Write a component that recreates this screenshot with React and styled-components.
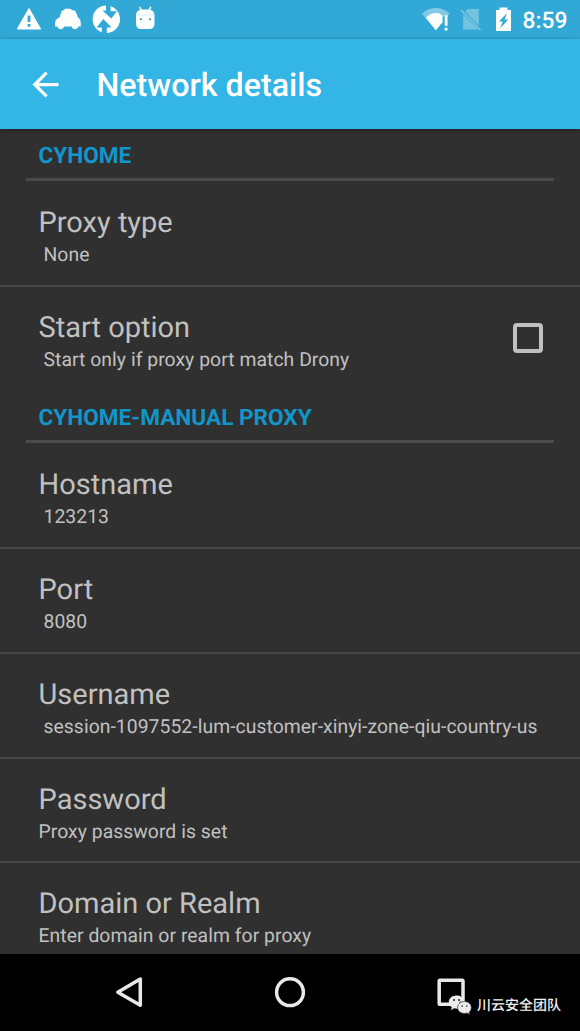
import React from 'react';
import styled, { createGlobalStyle } from 'styled-components';

const GlobalStyle = createGlobalStyle`
  * { box-sizing: border-box; }
  body {
    margin: 0;
    background: #000;
    font-family: Roboto, "Noto Sans CJK SC", sans-serif;
    text-rendering: geometricPrecision;
  }
`;

const Screen = styled.div`
  width: 580px;
  height: 1031px;
  display: flex;
  flex-direction: column;
  overflow: hidden;
  background: #303030;
`;

const StatusBar = styled.header`
  height: 39px;
  flex: none;
  display: flex;
  justify-content: space-between;
  background: #31a8d6;
  color: #fff;
`;

const StatusIcons = styled.svg`
  display: block;
  flex: none;
`;

const StatusRight = styled.div`
  display: flex;
`;

const Clock = styled.span`
  width: 57.5px;
  font-size: 22.8px;
  font-weight: 500;
  line-height: 41px;
  white-space: nowrap;
`;

const AppBar = styled.div`
  height: 90px;
  flex: none;
  display: flex;
  align-items: center;
  padding-left: 25.5px;
  background: #33b5e5;
  color: #fff;
  box-shadow: 0 1px 5px rgba(0, 0, 0, 0.3);
  z-index: 1;
`;

const BackButton = styled.button`
  width: 71px;
  height: 39px;
  padding: 0;
  border: 0;
  background: none;
  color: inherit;
  text-align: left;

  svg { display: block; }
`;

const PageTitle = styled.h1`
  margin: 2px 0 0;
  font-size: 32.2px;
  line-height: 40px;
  font-weight: 500;
`;

const Settings = styled.main`
  flex: 1;
  min-height: 0;
  overflow: hidden;
`;

const CategoryTitle = styled.h2`
  height: 51.5px;
  margin: 0 26px;
  padding: 11px 12.5px 0;
  border-bottom: 3px solid #4b4b4b;
  color: #1295c8;
  font-size: 22.6px;
  line-height: 32px;
  font-weight: 700;
`;

const Row = styled.div`
  display: flex;
  height: ${(p) => (p.$first ? 106.25 : 104.7)}px;
  padding: ${(p) => (p.$first ? 24.5 : 23)}px 37px 0 38.5px;
  border-bottom: ${(p) => (p.$last ? 'none' : '2px solid #464646')};
  color: #c1c1c1;
`;

const RowText = styled.div`
  flex: 1;
  white-space: nowrap;
`;

const RowTitle = styled.div`
  font-size: 29px;
  line-height: 36px;
`;

const Summary = styled.div`
  padding-left: ${(p) => (p.$indent ? 5 : 0)}px;
  font-size: 19.33px;
  line-height: 27.5px;
  letter-spacing: 0.055px;
`;

const Checkbox = styled.span`
  width: 30px;
  height: 30px;
  margin-top: 13px;
  border: 4px solid #c0c0c0;
  border-radius: 4px;
`;

const NavBar = styled.nav`
  position: relative;
  height: 77px;
  flex: none;
  background: #000;

  svg { display: block; }
`;

const Watermark = styled.div`
  position: absolute;
  left: 447px;
  top: 39px;
  display: flex;
  gap: 5px;
  color: #f2f2f2;
  font-family: "Noto Sans CJK SC", sans-serif;
  font-size: 14px;
  font-weight: 500;
  line-height: 24px;
  white-space: nowrap;
`;

function NotificationIcons() {
  return (
    <StatusIcons width="170" height="39" fill="#fff">
      <path d="M29 8.5 L40.6 29 H17.2 Z" stroke="#fff" strokeWidth="1" strokeLinejoin="round" />
      <path d="M27.6 15.5h2.8v6.5h-2.8zM27.6 24h2.8v2.8h-2.8z" fill="#31a8d6" />
      <path d="M59.5 17.5 L61.5 11.5 Q62 10 64 10 L65 8.8 H70.5 L71.5 10 Q75 10 75.8 11.7 L77.8 17 Q80.8 19.5 80.8 23 V26.6 H78.4 A3.6 3.6 0 0 1 71.5 26.6 H64.2 A3.6 3.6 0 0 1 57.3 26.6 H55 V23 Q55.5 18.5 59.5 17.5 Z" />
      <circle cx="106.3" cy="19.2" r="13.7" />
      <g fill="#31a8d6">
        <path d="M106 5 H110.6 V11.3 H117 L111.3 18.5 L102.5 10.5 H106z" />
        <path d="M101.8 33.5 V27.5 H96.5 L103.3 19 L111.5 27.5 H106.8 V33.5z" />
      </g>
      <path d="M136 16 Q136 10.5 140.2 9.8 L139 7 L140.2 6.5 L141.8 9.6 H148.5 L150.2 6.5 L151.5 7 L150.2 9.8 Q154.5 10.5 154.5 16 V23 Q154.5 29 149.5 29 H141 Q136 29 136 23z" />
      <path d="M136.5 14.9h17.7" stroke="#c5e7f4" strokeWidth="0.8" />
      <circle cx="140.8" cy="19.2" r="1" fill="#258db5" />
      <circle cx="150" cy="19.2" r="1" fill="#258db5" />
    </StatusIcons>
  );
}

function SystemIcons() {
  return (
    <StatusIcons width="103" height="39" viewBox="420 0 103 39" fill="#fff">
      <path d="M422 13.4 Q435.7 2.7 449.7 13.4 L446.8 16.5 H442.5 V22 L435.8 30.3 Z" fill="#82c9e5" />
      <path d="M425.7 17.5 Q435.5 9.8 442.5 15.5 V22.3 L435.8 30.3 Z" />
      <path d="M444.7 15.2h2.8v10.6h-2.8zM444.7 27.8h2.8v2.7h-2.8z" />
      <path d="M468 9 H478.8 V25.4 L465.2 11.8z M463.2 14.4 L478.4 29.6 H463.2z" fill="#75c2df" />
      <path d="M460.7 9.8 L480.5 30" stroke="#75c2df" strokeWidth="1.8" />
      <path d="M496 10 H499.5 V7.6 H507.5 V10 H511 V31 H496z" />
      <path d="M507 13 L499 21.4 H502.8 L500.2 28.2 L508.3 19.4 H504.6z" fill="#31a8d6" />
    </StatusIcons>
  );
}

function BackIcon() {
  return (
    <svg width="39" height="39" viewBox="0 0 24 24" fill="currentColor">
      <path d="M20 11H7.8l5.6-5.6L12 4l-8 8 8 8 1.4-1.4L7.8 13H20z" />
    </svg>
  );
}

function NavIcons() {
  return (
    <svg width="580" height="77" viewBox="0 954 580 77" fill="none" stroke="#e9e9e9" strokeWidth="3.5" strokeLinejoin="round">
      <path d="M140.3 979 V1005.3 L117.8 992.2z" />
      <circle cx="290" cy="992.2" r="13.4" />
      <rect x="439.2" y="980.2" width="23.8" height="24" rx="0.8" />
    </svg>
  );
}

function WeChatIcon() {
  return (
    <svg width="25" height="24" viewBox="447 993 25 24" fill="#ececec">
      <path d="M456.5 995.5 C452 995.5 448.8 998.4 448.8 1002 C448.8 1004.2 450 1006 451.8 1007.2 L451 1010.2 L454 1008.3 Q456 1008.9 458 1008.7 C456.5 1002.5 461 1000.5 464 1001 C463.2 997.5 460.2 995.5 456.5 995.5z" />
      <path d="M464.5 1001.6 C460.5 1001.6 457.6 1004.3 457.6 1007.7 C457.6 1011 460.8 1013.5 464.5 1013.5 L467.2 1013.1 L469.8 1014.5 L469.2 1012.2 C470.5 1011 471.3 1009.5 471.3 1007.7 C471.3 1004.3 468.4 1001.6 464.5 1001.6z" stroke="#222" strokeWidth="0.6" />
      <g fill="#181818">
        <circle cx="454" cy="1000" r="1" />
        <circle cx="459" cy="1000" r="1" />
        <circle cx="462.2" cy="1006" r="0.8" />
        <circle cx="466.8" cy="1006" r="0.8" />
      </g>
    </svg>
  );
}

function Preference({ title, summary, indent = true, first, last, children }) {
  return (
    <Row $first={first} $last={last}>
      <RowText>
        <RowTitle>{title}</RowTitle>
        <Summary $indent={indent}>{summary}</Summary>
      </RowText>
      {children}
    </Row>
  );
}

export default function App() {
  return (
    <Screen>
      <GlobalStyle />
      <StatusBar>
        <NotificationIcons />
        <StatusRight>
          <SystemIcons />
          <Clock>8:59</Clock>
        </StatusRight>
      </StatusBar>
      <AppBar>
        <BackButton aria-label="Back"><BackIcon /></BackButton>
        <PageTitle>Network details</PageTitle>
      </AppBar>
      <Settings>
        <CategoryTitle>CYHOME</CategoryTitle>
        <Preference title="Proxy type" summary="None" first />
        <Preference title="Start option" summary="Start only if proxy port match Drony" last>
          <Checkbox role="checkbox" aria-checked="false" />
        </Preference>
        <CategoryTitle>CYHOME-MANUAL PROXY</CategoryTitle>
        <Preference title="Hostname" summary="123213" first />
        <Preference title="Port" summary="8080" />
        <Preference title="Username" summary="session-1097552-lum-customer-xinyi-zone-qiu-country-us" />
        <Preference title="Password" summary="Proxy password is set" indent={false} />
        <Preference title="Domain or Realm" summary="Enter domain or realm for proxy" indent={false} last />
      </Settings>
      <NavBar>
        <NavIcons />
        <Watermark>
          <WeChatIcon />
          <span>川云安全团队</span>
        </Watermark>
      </NavBar>
    </Screen>
  );
}
